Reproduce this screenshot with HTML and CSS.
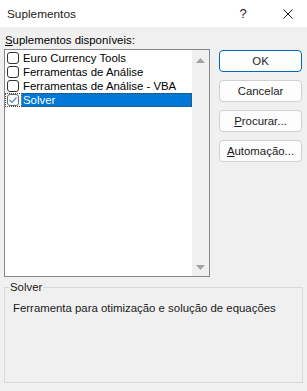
FILE: index.html
```html
<!DOCTYPE html>
<html lang="pt">
<head>
<meta charset="utf-8">
<link rel="stylesheet" href="styles.css">
</head>
<body>
<div class="dialog">
  <div class="titlebar">
    <span class="title">Suplementos</span>
    <span class="tb-help">?</span>
    <span class="tb-close"><svg width="10" height="10" viewBox="0 0 10 10"><path d="M0.5 0.5 L9.5 9.5 M9.5 0.5 L0.5 9.5" stroke="#1a1a1a" stroke-width="1" fill="none"/></svg></span>
  </div>
  <div class="content">
    <div class="label"><u>S</u>uplementos disponíveis:</div>
    <div class="main">
      <div class="listbox">
        <div class="items">
          <div class="item"><span class="cb"></span><span class="text">Euro Currency Tools</span></div>
          <div class="item"><span class="cb"></span><span class="text">Ferramentas de Análise</span></div>
          <div class="item"><span class="cb"></span><span class="text">Ferramentas de Análise - VBA</span></div>
          <div class="item selected"><span class="cb checked"><svg width="10" height="10" viewBox="0 0 10 10"><path d="M1.5 5 L4 7.5 L8.5 2.5" stroke="#4d86c4" stroke-width="1.2" fill="none"/></svg></span><span class="text">Solver</span></div>
        </div>
        <div class="scrollbar">
          <svg width="9" height="5" viewBox="0 0 9 5"><path d="M0 5 L4.5 0 L9 5 Z" fill="#a3a3a3"/></svg>
          <svg width="9" height="5" viewBox="0 0 9 5"><path d="M0 0 L4.5 5 L9 0 Z" fill="#a3a3a3"/></svg>
        </div>
      </div>
      <div class="buttons">
        <div class="btn default">OK</div>
        <div class="btn">Cancelar</div>
        <div class="btn"><u>P</u>rocurar...</div>
        <div class="btn"><u>A</u>utomação...</div>
      </div>
    </div>
    <fieldset class="group">
      <legend>Solver</legend>
      <div class="desc">Ferramenta para otimização e solução de equações</div>
    </fieldset>
  </div>
</div>
</body>
</html>
```
FILE: styles.css
```css
* { box-sizing: border-box; }
html, body { margin: 0; padding: 0; }
body {
  width: 307px;
  height: 391px;
  background: #f0f0f0;
  font-family: "Liberation Sans", Arial, sans-serif;
  font-size: 11.4px;
  color: #000;
  overflow: hidden;
}
.dialog { width: 307px; height: 391px; display: flex; flex-direction: column; }
.titlebar {
  height: 27px;
  background: #ffffff;
  display: flex;
  align-items: center;
  padding-left: 7px;
  padding-right: 9px;
}
.title { flex: 1; color: #1a1a1a; font-size: 11.8px; }
.tb-help { width: 20px; text-align: center; color: #1a1a1a; font-size: 13px; }
.tb-close { width: 20px; margin-left: 25px; display: flex; justify-content: center; align-items: center; }
.content { padding: 0 4px; }
.label { margin-top: 5px; height: 16px; line-height: 16px; padding-left: 1px; }
.main { display: flex; margin-top: 1px; }
.listbox {
  width: 206px;
  height: 228px;
  border: 1px solid #828790;
  background: #fff;
  display: flex;
}
.items { flex: 1; padding-top: 1px; }
.item { display: flex; align-items: center; height: 14px; }
.cb {
  width: 12px; height: 12px;
  margin-left: 2px;
  border: 1px solid #333;
  border-radius: 3px;
  background: #fff;
  display: flex; align-items: center; justify-content: center;
}
.text { margin-left: 2px; padding-left: 2px; line-height: 14px; height: 14px; flex: 1; white-space: nowrap; }
.selected { outline: 1px dotted #444; outline-offset: -1px; }
.selected .cb { border-color: #666; }
.selected .text { background: #0078d7; color: #fff; outline: 1px dotted #e8893a; outline-offset: -1px; }
.scrollbar {
  width: 17px;
  background: #f0f0f0;
  display: flex;
  flex-direction: column;
  justify-content: space-between;
  align-items: center;
  padding: 8px 0 6px;
}
.buttons { margin-left: 9px; display: flex; flex-direction: column; gap: 8px; padding-top: 1px; }
.btn {
  width: 83px; height: 22px;
  background: #fdfdfd;
  border: 1px solid #d0d0d0;
  border-radius: 4px;
  display: flex; align-items: center; justify-content: center;
  color: #1a1a1a;
}
.btn.default { border-color: #0067c0; }
.group {
  margin: 2px 0 0 0;
  width: 299px;
  height: 104px;
  border: 1px solid #d9d9d9;
  padding: 0 5px;
}
.group legend { padding: 0 1px; margin-left: -1px; line-height: 16px; color: #1a1a1a; }
.desc { margin-top: 5px; padding-left: 3px; line-height: 16px; color: #1a1a1a; }
```
